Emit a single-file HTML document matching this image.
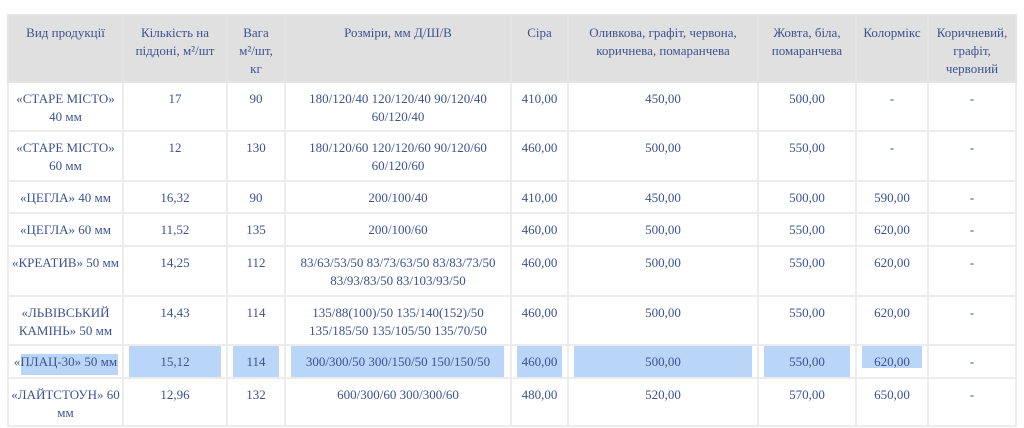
<!DOCTYPE html>
<html><head><meta charset="utf-8"><style>
body{margin:0;background:#fff;width:1024px;height:428px;overflow:hidden}
table{position:absolute;left:7px;top:14px;border-collapse:collapse;table-layout:fixed;font-family:"Liberation Serif","DejaVu Serif",serif;font-size:13px;color:#3d5291;line-height:18px}
td,th{border:2px solid #ececec;text-align:center;vertical-align:top;padding:0 3px;font-weight:normal;position:relative}
th{background:#e0e0e0;padding-top:8px;border-color:#e4e4e4}
td{padding-top:7px}
.h{position:absolute;background:#b9d5f7;z-index:-1}
td span{position:relative}
.nw{white-space:nowrap;padding:7px 0 0}
</style></head><body>
<table>
<colgroup><col style="width:115px"><col style="width:104px"><col style="width:58px"><col style="width:226px"><col style="width:57px"><col style="width:190px"><col style="width:98px"><col style="width:72px"><col style="width:88px"></colgroup>
<tr style="height:67px"><th>Вид продукції</th><th>Кількість на піддоні, м²/шт</th><th>Вага<br>м²/шт,<br>кг</th><th>Розміри, мм Д/Ш/В</th><th>Сіра</th><th>Оливкова, графіт, червона, коричнева, помаранчева</th><th>Жовта, біла, помаранчева</th><th>Колормікс</th><th>Коричневий, графіт, червоний</th></tr>
<tr style="height:49px"><td>«СТАРЕ МІСТО» 40 мм</td><td>17</td><td>90</td><td>180/120/40 120/120/40 90/120/40 60/120/40</td><td>410,00</td><td>450,00</td><td>500,00</td><td>-</td><td>-</td></tr>
<tr style="height:50px"><td>«СТАРЕ МІСТО» 60 мм</td><td>12</td><td>130</td><td>180/120/60 120/120/60 90/120/60 60/120/60</td><td>460,00</td><td>500,00</td><td>550,00</td><td>-</td><td>-</td></tr>
<tr style="height:32px"><td>«ЦЕГЛА» 40 мм</td><td>16,32</td><td>90</td><td>200/100/40</td><td>410,00</td><td>450,00</td><td>500,00</td><td>590,00</td><td>-</td></tr>
<tr style="height:33px"><td>«ЦЕГЛА» 60 мм</td><td>11,52</td><td>135</td><td>200/100/60</td><td>460,00</td><td>500,00</td><td>550,00</td><td>620,00</td><td>-</td></tr>
<tr style="height:50px"><td class="nw">«КРЕАТИВ» 50 мм</td><td>14,25</td><td>112</td><td>83/63/53/50 83/73/63/50 83/83/73/50 83/93/83/50 83/103/93/50</td><td>460,00</td><td>500,00</td><td>550,00</td><td>620,00</td><td>-</td></tr>
<tr style="height:49px"><td>«ЛЬВІВСЬКИЙ КАМІНЬ» 50 мм</td><td>14,43</td><td>114</td><td>135/88(100)/50 135/140(152)/50 135/185/50 135/105/50 135/70/50</td><td>460,00</td><td>500,00</td><td>550,00</td><td>620,00</td><td>-</td></tr>
<tr style="height:33px"><td class="nw"><div class="h" style="left:12px;right:4px;top:8px;bottom:2px"></div><span>«ПЛАЦ-30» 50 мм</span></td><td><div class="h" style="left:5px;right:5px;top:0;bottom:0"></div><span>15,12</span></td><td><div class="h" style="left:5px;right:5px;top:0;bottom:0"></div><span>114</span></td><td><div class="h" style="left:5px;right:6px;top:0;bottom:0"></div><span>300/300/50 300/150/50 150/150/50</span></td><td><div class="h" style="left:5px;right:5px;top:0;bottom:0"></div><span>460,00</span></td><td><div class="h" style="left:5px;right:5px;top:0;bottom:0"></div><span>500,00</span></td><td><div class="h" style="left:5px;right:5px;top:0;bottom:0"></div><span>550,00</span></td><td><div class="h" style="left:5px;right:5px;top:0;bottom:9px"></div><span>620,00</span></td><td>-</td></tr>
<tr style="height:48px"><td class="nw">«ЛАЙТСТОУН» 60<br>мм</td><td>12,96</td><td>132</td><td>600/300/60 300/300/60</td><td>480,00</td><td>520,00</td><td>570,00</td><td>650,00</td><td>-</td></tr>
</table>
</body></html>
